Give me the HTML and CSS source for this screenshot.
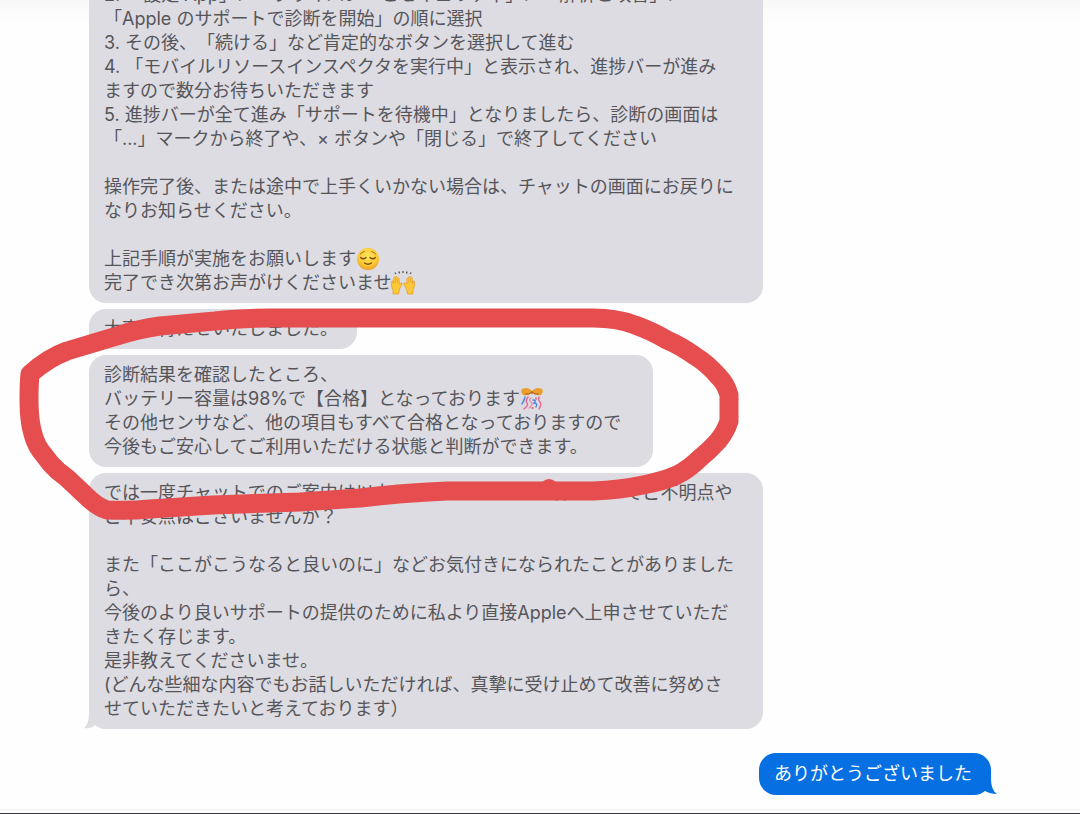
FILE: index.html
```
<!DOCTYPE html>
<html lang="ja">

<head>
    <meta charset="UTF-8">
    <meta name="viewport" content="width=device-width, initial-scale=1.0">
    <title>チャット</title>
    <link rel="stylesheet" href="styles.css">
</head>

<body>
    <main class="thread">
        <div class="bubble wide">
            2. 「設定 App」＞「プライバシーとセキュリティ」＞「解析と改善」＞<br>
            「Apple のサポートで診断を開始」の順に選択<br>
            3. その後、「続ける」など肯定的なボタンを選択して進む<br>
            4. 「モバイルリソースインスペクタを実行中」と表示され、進捗バーが進み<br>
            ますので数分お待ちいただきます<br>
            5. 進捗バーが全て進み「サポートを待機中」となりましたら、診断の画面は<br>
            「...」マークから終了や、× ボタンや「閉じる」で終了してください<br>
            <br>
            操作完了後、または途中で上手くいかない場合は、チャットの画面にお戻りに<br>
            なりお知らせください。<br>
            <br>
            上記手順が実施をお願いします<svg class="emoji" viewBox="0 0 24 24" role="img" aria-label="ほっとした顔">
                <defs>
                    <radialGradient id="face" cx="50%" cy="35%" r="65%">
                        <stop offset="0" stop-color="#ffe55c" />
                        <stop offset="0.7" stop-color="#fcc733" />
                        <stop offset="1" stop-color="#ee9b20" />
                    </radialGradient>
                </defs>
                <circle cx="12" cy="12" r="11" fill="url(#face)" />
                <path d="M4.500 10.500q2.800 2.600 5.500 0M14 10.500q2.800 2.600 5.500 0M8.500 16q3.500 2.500 7 0" fill="none" stroke="#7d4c14" stroke-width="1.300" stroke-linecap="round" />
                <path d="M4.500 7q1.500-2 4-2.500M19.500 7q-1.500-2-4-2.500" fill="none" stroke="#b97a1e" stroke-width="1.100" stroke-linecap="round" />
            </svg><br>
            完了でき次第お声がけくださいませ<svg class="emoji" viewBox="0 0 24 24" role="img" aria-label="両手を上げる">
                <path d="M4 1.500l.8 1.500M8 .5l.5 2M12 0v2M16 .5l-.5 2M20 1.500l-.8 1.500" stroke="#55534f" stroke-width="1.300" />
                <g id="hand">
                    <path d="M2 23v-4C.5 16 0 13 .5 10.500q.8-1 1.500 0l.5 2 .3-6q.8-1 1.600 0l.4-.8q.8-.6 1.400.3l.3 1q1-.5 1.500.5l.3 5.500 1.700-1q1.500-.2 1.300 1L8.500 18 7.500 23z" fill="#fcc838" stroke="#e29a22" stroke-width=".7" stroke-linejoin="round" />
                    <path d="M4.400 7v5M6.200 7.500v4.500" stroke="#e5a02a" stroke-width=".6" />
                </g>
                <use href="#hand" transform="matrix(-1 0 0 1 24 0)" />
            </svg>
        </div>

        <div class="bubble">大変お待たせいたしました。</div>

        <div class="bubble result">
            診断結果を確認したところ、<br>
            バッテリー容量は98%で【合格】となっております<svg class="emoji" viewBox="0 0 24 24" role="img" aria-label="くす玉">
                <path d="M12 6Q8 9 3 8 0 5 2 2 8-1 12 4z" fill="#eba02d" />
                <path d="M12 6q4 3 9 2 3-3 1-6-6-3-10 2z" fill="#eba02d" />
                <path d="M5 7q4 1 7-2M19 7q-4 1-7-2M12 4v3" fill="none" stroke="#a95f22" stroke-width="1" />
                <g fill="none" stroke-width="1.400" stroke-linecap="round">
                    <path d="M5 10q-1 4-3 7M13 13q4 0 1 3 4 0 2 4" stroke="#4a86df" />
                    <path d="M8 10q-3 4-1 6t-3 6M19 10q-1 3 1 5t-1 7" stroke="#ec6591" />
                    <path d="M11 11q-3 2 0 4t-2 6" stroke="#ee8ba8" />
                    <path d="M12 21h1M16 11v1" stroke="#d9515b" />
                </g>
            </svg><br>
            その他センサなど、他の項目もすべて合格となっておりますので<br>
            今後もご安心してご利用いただける状態と判断ができます。
        </div>

        <div class="bubble wide">
            では一度チャットでのご案内は以上となりますが、この件についてご不明点や<br>
            ご不安点はございませんか？<br>
            <br>
            また「ここがこうなると良いのに」などお気付きになられたことがありました<br>
            ら、<br>
            今後のより良いサポートの提供のために私より直接Appleへ上申させていただ<br>
            きたく存じます。<br>
            是非教えてくださいませ。<br>
            (どんな些細な内容でもお話しいただければ、真摯に受け止めて改善に努めさ<br>
            せていただきたいと考えております）
            <svg class="tail tail-left" viewBox="0 0 18 16" aria-hidden="true">
                <path d="M5 0Q5 11 0 15 7 16 11 12L18 16V0z" />
            </svg>
        </div>

        <div class="bubble sent">
            ありがとうございました
            <svg class="tail tail-right" viewBox="0 0 18 16" aria-hidden="true">
                <path d="M12 0Q12 11 18 15 11 15 6 12L0 10V0z" />
            </svg>
        </div>
    </main>

    <footer class="bottom-edge"></footer>

    <!-- red marker around the diagnosis result -->
    <svg class="marker" viewBox="0 0 1080 814" aria-hidden="true">
        <path d="M593 318H270Q240 318 215 321L160 326Q138 329 117 336L67 351Q48 358 30 374Q29 384 29 400Q29 421 33 434Q36 446 44 455Q50 464 58 471L67 478L85 495Q97 507 107 510Q130 511 150 509L213 505L300 502L360 498Q400 493 447 491H593Q620 490 643 485Q664 481 677 475Q689 469 699 459Q710 450 718 441Q726 431 729 421V395Q726 384 719 377Q708 364 695 356Q681 346 667 340Q652 331 635 325Q617 318 593 318z" />
        <circle class="marker-dot" cx="549" cy="488" r="9" />
    </svg>
</body>

</html>
```
FILE: styles.css
```
* {
    box-sizing: border-box;
}

body {
    margin: 0;
    height: 100vh;
    display: flex;
    flex-direction: column;
    overflow: hidden;
    position: relative;
    background: linear-gradient(#f8f8f8, #fefefe 24px);
    color: #55555a;
    font-family: Inter, "Noto Sans CJK JP", sans-serif;
    font-size: 18px;
    line-height: 24px;
    text-spacing-trim: space-all;
}

/* The newest message sits at the bottom, older ones run off the top */
.thread {
    flex: 1;
    min-height: 0;
    display: flex;
    flex-direction: column;
    justify-content: flex-end;
    align-items: flex-start;
    gap: 6px;
    padding: 0 89px 14px;
}

.bubble {
    flex: none;
    position: relative;
    min-width: 268px;
    padding: 8px 15px;
    border-radius: 17px;
    background-color: #dddce2;
}

.wide {
    width: 100%;
    max-width: 674px;
}

.result {
    width: 100%;
    max-width: 564px;
}

.sent {
    align-self: flex-end;
    min-width: 232px;
    margin-top: 18px;
    padding: 9px 15px;
    background-color: #0670e3;
    color: #ffffff;
}

.emoji {
    width: 24px;
    height: 24px;
    vertical-align: bottom;
}

.tail {
    position: absolute;
    bottom: 0;
    width: 18px;
    height: 16px;
}

.tail-left {
    left: -5px;
    fill: #dddce2;
}

.tail-right {
    right: -6px;
    fill: #0670e3;
}

.bottom-edge {
    flex: none;
    height: 5px;
    border-top: 1px solid #f0f0f2;
    border-bottom: 1px solid #38383c;
}

.marker {
    position: absolute;
    top: 0;
    left: 0;
    width: 1080px;
    height: 814px;
    pointer-events: none;
}

.marker path {
    fill: none;
    stroke: #e54d4e;
    stroke-width: 19px;
    stroke-linejoin: round;
}

.marker-dot {
    fill: #e54d4e;
}
```
